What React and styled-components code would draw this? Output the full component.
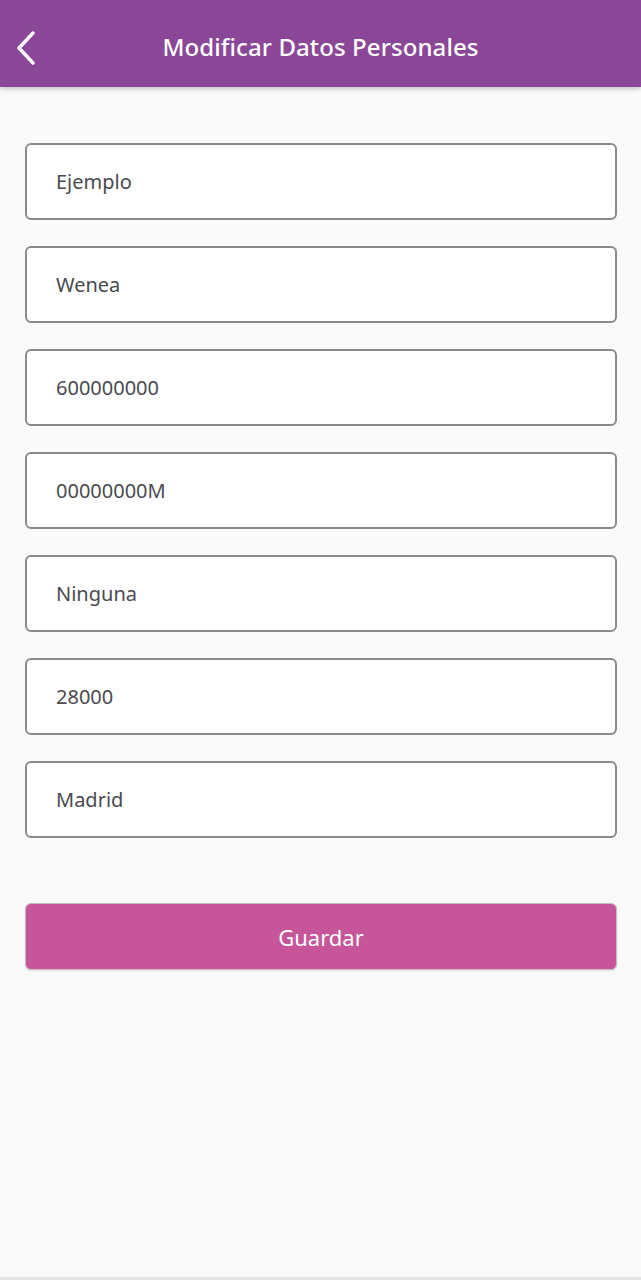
import React from "react";
import styled, { createGlobalStyle } from "styled-components";

const GlobalStyle = createGlobalStyle`
  html, body {
    margin: 0;
    padding: 0;
    background: #fafafa;
  }
  body {
    font-family: "Noto Sans", "Open Sans", sans-serif;
  }
`;

const fields = ["Ejemplo", "Wenea", "600000000", "00000000M", "Ninguna", "28000", "Madrid"];

const App = () => {
  return (
    <Page>
      <GlobalStyle />
      <Header>
        <BackButton aria-label="Volver">
          <svg width="24" height="36" viewBox="0 0 24 36" fill="none">
            <path
              d="M19 3 L5 18 L19 33"
              stroke="#fff"
              strokeWidth="3.4"
              strokeLinecap="round"
              strokeLinejoin="round"
            />
          </svg>
        </BackButton>
        <Title>Modificar Datos Personales</Title>
      </Header>
      <Form>
        {fields.map((value, i) => (
          <Field key={i} defaultValue={value} />
        ))}
        <SaveButton type="button">Guardar</SaveButton>
      </Form>
      <BottomLine />
    </Page>
  );
};

export default App;

// styles
const Page = styled.div`
  position: relative;
  display: flex;
  flex-direction: column;
  width: 100%;
  height: 1280px;
  background: #fafafa;
`;
const Header = styled.header`
  position: relative;
  display: flex;
  align-items: center;
  justify-content: center;
  box-sizing: border-box;
  height: 87px;
  padding-top: 6px;
  background-color: #8b4797;
  box-shadow: 0 2px 5px rgba(0, 0, 0, 0.22);
  z-index: 1;
`;
const BackButton = styled.button`
  position: absolute;
  left: 14px;
  top: 30px;
  padding: 0;
  border: none;
  background: none;
  display: flex;
`;
const Title = styled.h1`
  margin: 0;
  color: #fff;
  font-size: 24px;
  font-weight: 500;
  letter-spacing: 0.1px;
`;
const Form = styled.div`
  display: flex;
  flex-direction: column;
  gap: 26px;
  padding: 56px 24px 0 25px;
  flex: 1;
`;
const Field = styled.input`
  box-sizing: border-box;
  width: 100%;
  height: 77px;
  padding: 0 29px;
  border: 2px solid #8a8a8a;
  border-radius: 6px;
  background: #fff;
  color: #4a4a4f;
  font-family: "Noto Sans", "Open Sans", sans-serif;
  font-size: 20px;
  outline: none;
`;
const SaveButton = styled.button`
  margin-top: 39px;
  height: 67px;
  width: 100%;
  border: 1px solid #c7bcc5;
  border-radius: 6px;
  background-color: #c6559a;
  color: #fff;
  font-family: "Noto Sans", "Open Sans", sans-serif;
  font-size: 22px;
  box-shadow: 0 1px 2px rgba(0, 0, 0, 0.12);
`;
const BottomLine = styled.div`
  height: 3px;
  background: #e3e3e3;
`;
